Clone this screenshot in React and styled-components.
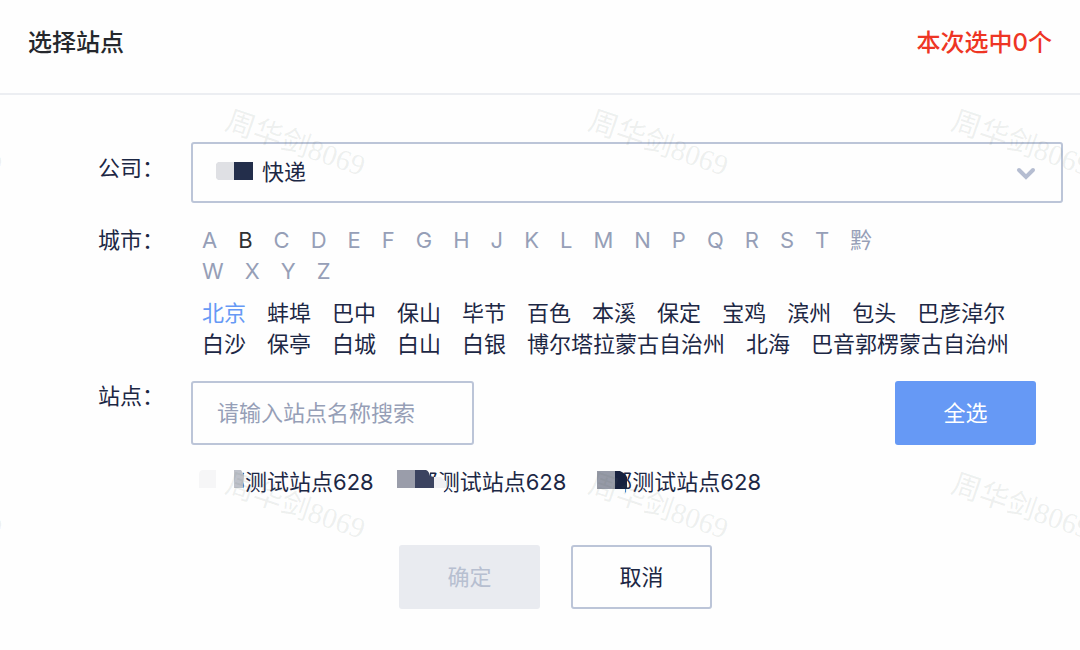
import React, { useState } from 'react';
import styled, { createGlobalStyle } from 'styled-components';

const GlobalStyle = createGlobalStyle`
  *, *::before, *::after { box-sizing: border-box; }
  body {
    margin: 0;
    background: #fefefe;
    color: #1c2744;
    font-family: Inter, "Noto Sans CJK SC", sans-serif;
    font-size: 22px;
    line-height: 31px;
  }
  button, input, select { font: inherit; color: inherit; }
`;

const Dialog = styled.main`
  position: relative;
  min-height: 100vh;
  overflow: hidden;
`;

const Header = styled.header`
  display: flex;
  align-items: center;
  justify-content: space-between;
  height: 95px;
  padding: 0 28px 8px;
  border-bottom: 2px solid #eceef2;
`;

const Title = styled.h1`
  margin: 0;
  font-size: 24px;
  font-weight: 500;
  color: #25282d;
`;

const Count = styled.strong`
  font-size: 24px;
  font-weight: 500;
  color: #ee3524;
`;

const Form = styled.form`
  padding: 47px 17px 40px 98px;
`;

const Row = styled.div`
  display: flex;
  align-items: flex-start;
  margin-bottom: ${(p) => p.$gap || 0}px;
`;

const Label = styled.label`
  flex: 0 0 93px;
  padding-top: ${(p) => (p.$low ? 11 : 0)}px;
`;

const Field = styled.div`
  flex: 1;
  min-width: 0;
`;

const SelectBox = styled.div`
  position: relative;
`;

const Select = styled.select`
  display: block;
  width: 100%;
  height: 61px;
  padding: 0 60px 0 69px;
  border: 2px solid #bcc5d8;
  border-radius: 3px;
  background: transparent;
  appearance: none;
`;

const SelectMask = styled.svg`
  position: absolute;
  left: 25px;
  top: 20px;
  pointer-events: none;
`;

const Chevron = styled.svg`
  position: absolute;
  right: 27px;
  top: 25px;
  pointer-events: none;
`;

const Options = styled.div`
  display: flex;
  flex-wrap: wrap;
  column-gap: 21px;
  max-width: ${(p) => (p.$narrow ? '722px' : 'none')};
  margin-bottom: ${(p) => (p.$narrow ? 11 : 0)}px;
  padding-left: 11px;
`;

const Option = styled.button`
  padding: 0;
  border: 0;
  background: none;
  color: ${(p) => p.$color || '#1c2744'};
  cursor: pointer;
`;

const SearchLine = styled.div`
  display: flex;
  justify-content: space-between;
  padding-right: 27px;
`;

const Search = styled.input`
  width: 283px;
  height: 64px;
  padding: 0 24px;
  border: 2px solid #bcc5d8;
  border-radius: 3px;
  background: transparent;
  &::placeholder { color: #969fb7; opacity: 1; }
`;

const Button = styled.button`
  width: 141px;
  height: 64px;
  padding: 0;
  border: ${(p) => (p.$kind === 'outline' ? '2px solid #bcc5d8' : '0')};
  border-radius: 3px;
  background: ${(p) => ({ primary: '#6699f5', muted: '#e9ebf0', outline: 'transparent' })[p.$kind]};
  color: ${(p) => ({ primary: '#ffffff', muted: '#b7bfd0', outline: '#1c2744' })[p.$kind]};
`;

const Sites = styled.div`
  display: flex;
  flex-wrap: wrap;
  column-gap: 23px;
  padding: 22px 0 0 8px;
`;

const Site = styled.button`
  display: flex;
  padding: 0;
  border: 0;
  background: none;
`;

const Prefix = styled.span`
  position: relative;
  width: ${(p) => p.$width}px;
  text-align: right;
`;

const PrefixMask = styled.svg`
  position: absolute;
  left: 0;
  top: 0;
  overflow: visible;
`;

const Footer = styled.footer`
  display: flex;
  justify-content: center;
  gap: 31px;
  padding: 47px 50px 0 0;
`;

const Watermarks = styled.div`
  position: absolute;
  left: -249px;
  top: -38px;
  display: grid;
  grid-template-columns: repeat(4, 363px);
  grid-auto-rows: 363px;
  place-items: center;
  pointer-events: none;
  user-select: none;
`;

const Mark = styled.span`
  font-family: "Liberation Serif", "Noto Sans CJK SC", serif;
  font-size: 29px;
  color: rgba(90, 110, 100, 0.1);
  transform: rotate(19deg);
`;

const letters = [...'ABCDEFGHJKLMNPQRST黔WXYZ'];
const cities = [
  '北京', '蚌埠', '巴中', '保山', '毕节', '百色', '本溪', '保定', '宝鸡', '滨州', '包头', '巴彦淖尔',
  '白沙', '保亭', '白城', '白山', '白银', '博尔塔拉蒙古自治州', '北海', '巴音郭楞蒙古自治州',
];

const sites = [
  {
    width: 46,
    mask: (
      <>
        <path d="M0 2H44V27H0Z" fill="#fefefe" />
        <path d="M4 3H17V21H0V8Q0 3 4 3Z" fill="#f6f6f7" />
        <path d="M35 3H42L45 8L44 21H35Z" fill="#bec1c9" />
      </>
    ),
  },
  {
    width: 41,
    mask: (
      <>
        <path d="M18 2H33V10H38L49 14V21L45 27V29H18Z" fill="#fefefe" />
        <path d="M0 3H18V21H0Z" fill="#9a9daa" />
        <path d="M18 3H29Q32 4 33 9L37 10V21H18Z" fill="#3b4360" />
        <path d="M37 10H44L49 15V21H37Z" fill="#efeff3" />
      </>
    ),
  },
  {
    width: 43,
    mask: (
      <>
        <path d="M20 20H36V29H20Z" fill="#fcfdfd" />
        <path d="M8 4H26V22H8Z" fill="#969aa7" />
        <path d="M26 4H31Q36 6 38 10V22H26Z" fill="#17213f" />
      </>
    ),
  },
];

export default function App() {
  const [letter, setLetter] = useState('B');
  const [city, setCity] = useState('北京');

  return (
    <>
      <GlobalStyle />
      <Dialog>
        <Header>
          <Title>选择站点</Title>
          <Count>本次选中0个</Count>
        </Header>
        <Form onSubmit={(e) => e.preventDefault()}>
          <Row $gap={22}>
            <Label htmlFor="company" $low>公司：</Label>
            <Field>
              <SelectBox>
                <Select id="company">
                  <option>快递</option>
                </Select>
                <SelectMask width="37" height="18" aria-hidden="true">
                  <path d="M2 0H18V18H2L0 16V2Z" fill="#dfe0e4" />
                  <path d="M18 0H37V18H18Z" fill="#232e4b" />
                </SelectMask>
                <Chevron width="20" height="14" viewBox="0 0 20 14" fill="none" aria-hidden="true">
                  <path d="M3 3L10 10L17 3" stroke="#b5bdd1" strokeWidth="4" strokeLinecap="round" />
                </Chevron>
              </SelectBox>
            </Field>
          </Row>
          <Row $gap={21}>
            <Label as="div" id="city-label">城市：</Label>
            <Field role="group" aria-labelledby="city-label">
              <Options $narrow>
                {letters.map((l) => (
                  <Option
                    key={l}
                    type="button"
                    $color={l === letter ? '#303133' : '#969fb7'}
                    onClick={() => setLetter(l)}
                  >
                    {l}
                  </Option>
                ))}
              </Options>
              <Options>
                {cities.map((c) => (
                  <Option
                    key={c}
                    type="button"
                    $color={c === city ? '#6699f5' : undefined}
                    onClick={() => setCity(c)}
                  >
                    {c}
                  </Option>
                ))}
              </Options>
            </Field>
          </Row>
          <Row>
            <Label htmlFor="site">站点：</Label>
            <Field>
              <SearchLine>
                <Search id="site" type="text" placeholder="请输入站点名称搜索" />
                <Button type="button" $kind="primary">全选</Button>
              </SearchLine>
              <Sites>
                {sites.map((s, i) => (
                  <Site key={i} type="button">
                    <Prefix $width={s.width}>
                      部
                      <PrefixMask width={s.width} height="31" aria-hidden="true">{s.mask}</PrefixMask>
                    </Prefix>
                    测试站点628
                  </Site>
                ))}
              </Sites>
            </Field>
          </Row>
          <Footer>
            <Button type="submit" $kind="muted" disabled>确定</Button>
            <Button type="button" $kind="outline">取消</Button>
          </Footer>
        </Form>
        <Watermarks aria-hidden="true">
          {Array.from({ length: 8 }, (_, i) => (
            <Mark key={i}>周华剑8069</Mark>
          ))}
        </Watermarks>
      </Dialog>
    </>
  );
}
